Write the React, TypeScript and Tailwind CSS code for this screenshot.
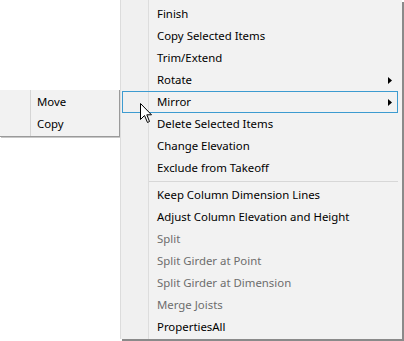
import React from "react";

type Item = { label: string; disabled?: boolean; sub?: boolean; hot?: boolean; sep?: boolean };

const items: Item[] = [
  { label: "Finish" },
  { label: "Copy Selected Items" },
  { label: "Trim/Extend" },
  { label: "Rotate", sub: true },
  { label: "Mirror", sub: true, hot: true },
  { label: "Delete Selected Items" },
  { label: "Change Elevation" },
  { label: "Exclude from Takeoff" },
  { label: "", sep: true },
  { label: "Keep Column Dimension Lines" },
  { label: "Adjust Column Elevation and Height" },
  { label: "Split", disabled: true },
  { label: "Split Girder at Point", disabled: true },
  { label: "Split Girder at Dimension", disabled: true },
  { label: "Merge Joists", disabled: true },
  { label: "PropertiesAll" },
];

function Arrow() {
  return (
    <svg width="4" height="7" viewBox="0 0 4 7" className="block">
      <path d="M0 0 L4 3.5 L0 7 Z" fill="#000" />
    </svg>
  );
}

export default function App() {
  return (
    <div
      className="relative w-[404px] h-[341px] bg-white overflow-hidden text-[11.4px] leading-none"
      style={{ fontFamily: '"Noto Sans", "Segoe UI", sans-serif' }}
    >
      {/* left submenu */}
      <div className="absolute left-0 top-[90px] w-[120px] bg-[#f2f2f2] border-r border-b border-[#9a9a9a] shadow-[1px_1px_0_#c8c8c8]">
        <div className="flex">
          <div className="w-[31px] border-r border-[#d5d5d5]" />
          <div className="flex flex-col pt-[1px] pb-[1px]">
            <div className="h-[22px] flex items-center pl-[6px] text-black">Move</div>
            <div className="h-[22px] flex items-center pl-[6px] text-black">Copy</div>
          </div>
        </div>
      </div>

      {/* main context menu */}
      <div className="absolute left-[120px] top-0 w-[282px] h-[339px] bg-[#f2f2f2] border-l border-[#dcdcdc] shadow-[2px_2px_0_#8a8a8a]">
        <div className="relative flex h-full">
          <div className="w-[28px] shrink-0 border-r border-[#dddddd] bg-[#f0f0f0]" />
          <div className="flex-1 flex flex-col pt-[3px]">
            {items.map((it, i) =>
              it.sep ? (
                <div key={i} className="h-[5px] flex items-center pr-[4px]">
                  <div className="h-px w-full bg-[#d7d7d7]" />
                </div>
              ) : (
                <div
                  key={i}
                  className={
                    "h-[22px] flex items-center justify-between pl-[8px] pr-[10px] " +
                    (it.disabled ? "text-[#6d6d6d]" : "text-black")
                  }
                >
                  <span>{it.label}</span>
                  {it.sub ? <Arrow /> : null}
                </div>
              )
            )}
          </div>
          {/* hot item outline */}
          <div className="absolute left-[1px] top-[91px] w-[276px] h-[22px] border border-[#3d9bd0]" />
        </div>
      </div>

      {/* mouse cursor */}
      <svg
        className="absolute left-[140px] top-[103px]"
        width="13"
        height="21"
        viewBox="0 0 13 21"
      >
        <path
          d="M0.5 0.5 L0.5 16.5 L4.5 12.5 L7.5 19.5 L9.5 18.5 L6.8 11.8 L11.5 11.8 Z"
          fill="#fff"
          stroke="#000"
          strokeWidth="1"
          strokeLinejoin="miter"
        />
      </svg>
    </div>
  );
}
